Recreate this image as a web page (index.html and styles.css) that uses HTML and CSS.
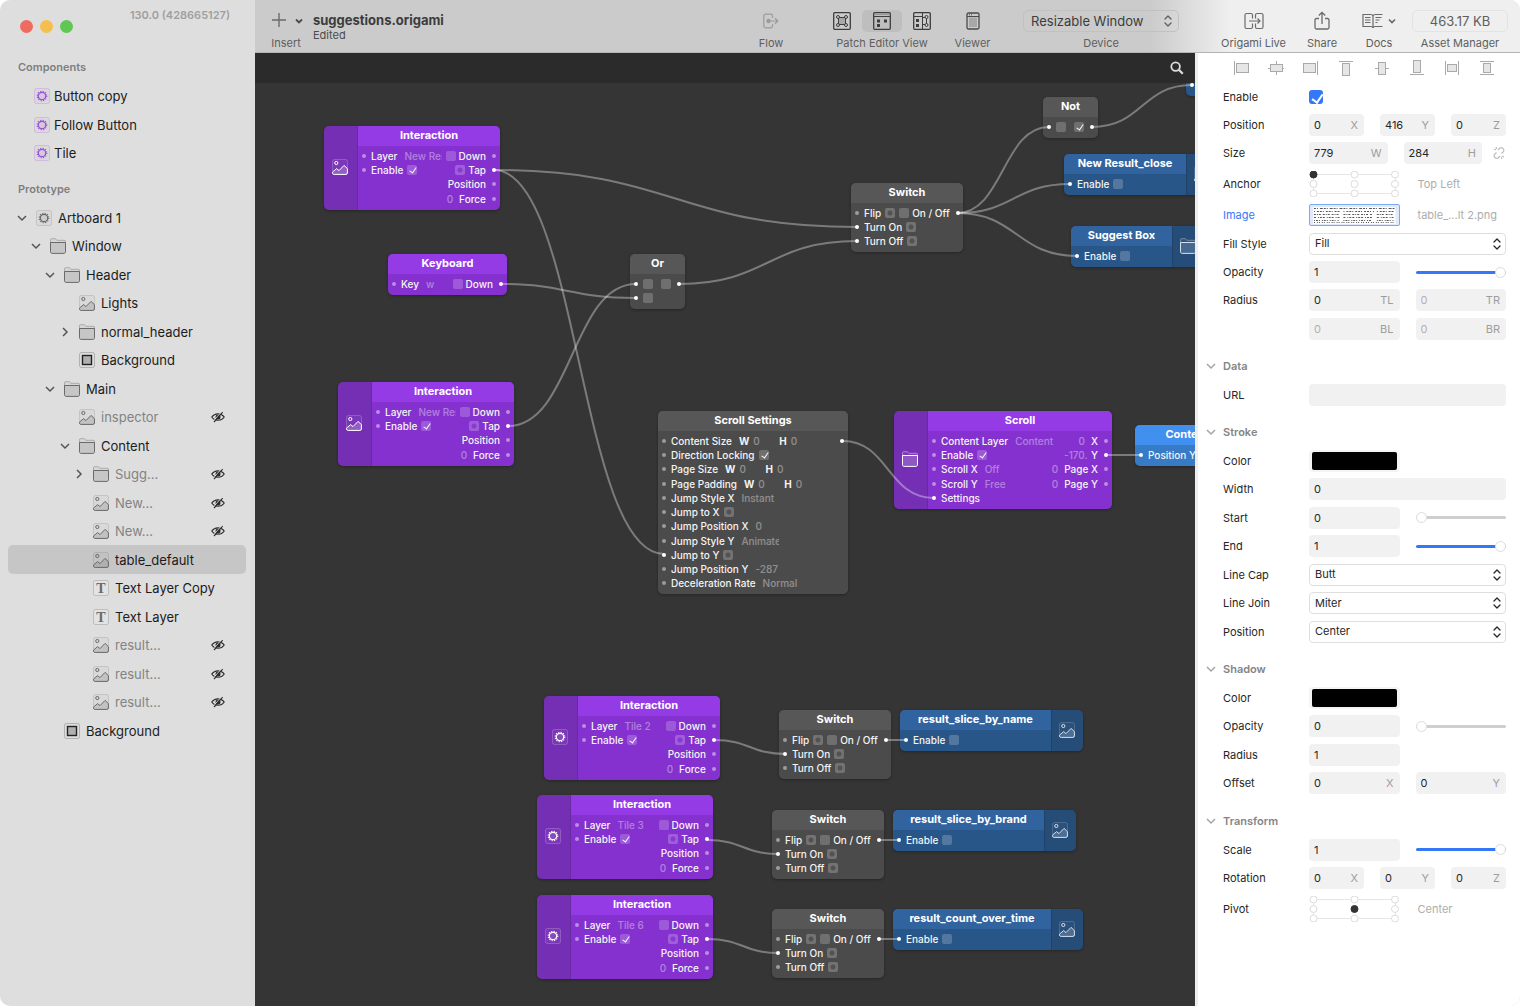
FILE: index.html
```html
<!DOCTYPE html>
<html lang="en">
<head>
<meta charset="utf-8">
<meta name="viewport" content="width=device-width, initial-scale=1">
<title>suggestions.origami</title>
<link rel="stylesheet" href="styles.css">
</head>
<body>
<svg class="symbols" aria-hidden="true">
  <symbol id="i-image" viewBox="0 0 16 16">
    <rect x=".5" y=".5" width="15" height="15" rx="2" fill="currentColor" fill-opacity=".04" stroke="currentColor" stroke-opacity=".2"/>
    <circle cx="4.3" cy="4" r="1.6" fill="none" stroke="currentColor"/>
    <path d="M.6 13 4.6 9.6 7 11.6 12 6.4 15.4 9.6V14a1.5 1.5 0 0 1-1.5 1.4H2.2A1.6 1.6 0 0 1 .6 13z" fill="currentColor" fill-opacity=".2" stroke="currentColor" stroke-linejoin="round"/>
  </symbol>
  <symbol id="i-folder" viewBox="0 0 16 16">
    <path d="M.5 5V1.8C.5 1 1 .7 1.500.7h4l1.300 1.600h7.700c.6 0 1 .4 1 1V5" fill="currentColor" fill-opacity=".06" stroke="currentColor" stroke-opacity=".4"/>
    <path d="M.5 4.500h15v9.300c0 1-.6 1.600-1.600 1.600H2.100c-1 0-1.600-.6-1.600-1.600z" fill="currentColor" fill-opacity=".2" stroke="currentColor"/>
  </symbol>
  <symbol id="i-gear" viewBox="0 0 16 16">
    <rect x=".5" y=".5" width="15" height="15" rx="2" fill="currentColor" fill-opacity=".04" stroke="currentColor" stroke-opacity=".2"/>
    <circle cx="8" cy="8" r="3.700" fill="currentColor" fill-opacity=".1" stroke="currentColor" stroke-width="1.200"/>
    <circle cx="8" cy="8" r="4.800" fill="none" stroke="currentColor" stroke-width="1.100" stroke-dasharray="1.250 1.263"/>
  </symbol>
  <symbol id="i-rect" viewBox="0 0 16 16">
    <rect x=".5" y=".5" width="15" height="15" rx="2" fill="none" stroke="#000" stroke-opacity=".2"/>
    <rect x="3.500" y="3.500" width="9" height="9" fill="#b0b0b0" stroke="#222" stroke-width="1.400"/>
  </symbol>
  <symbol id="i-text" viewBox="0 0 16 16">
    <rect x=".5" y=".5" width="15" height="15" rx="2" fill="#fff" fill-opacity=".15" stroke="#000" stroke-opacity=".15"/>
    <text x="8" y="12.600" text-anchor="middle" class="glyph-t">T</text>
  </symbol>
  <symbol id="i-hidden" viewBox="0 0 14 12">
    <path d="M.8 6C3.600 1.700 10.400 1.700 13.200 6 10.400 10.300 3.600 10.300.8 6z" fill="none" stroke="#2c2c2c" stroke-width="1.200"/>
    <circle cx="7" cy="6" r="2.500" fill="#2c2c2c"/>
    <path d="M3 11 11.600 1.200" stroke="#2c2c2c" stroke-width="1.200"/>
    <path d="M2.400 10 10.600.6" stroke="#dedede" stroke-width=".8"/>
  </symbol>
  <symbol id="i-down" viewBox="0 0 10 10"><path d="m1 3 4 4 4-4" fill="none" stroke="currentColor" stroke-width="1.500"/></symbol>
  <symbol id="i-right" viewBox="0 0 10 10"><path d="m3 1 4 4-4 4" fill="none" stroke="currentColor" stroke-width="1.500"/></symbol>
  <symbol id="i-updown" viewBox="0 0 8 12"><path d="m1 4 3-3 3 3M1 8l3 3 3-3" fill="none" stroke="currentColor" stroke-width="1.300" stroke-linecap="round" stroke-linejoin="round"/></symbol>
</svg>

<div class="window">
  <aside class="sidebar">
    <header class="sidebar-head">
      <div class="lights">
        <button class="light red" aria-label="Close"></button>
        <button class="light yellow" aria-label="Minimize"></button>
        <button class="light green" aria-label="Zoom"></button>
      </div>
      <span class="version">130.0 (428665127)</span>
    </header>
    <h2>Components</h2>
    <ul class="layers components">
      <li><svg class="icon purple-icon"><use href="#i-gear"/></svg>Button copy</li>
      <li><svg class="icon purple-icon"><use href="#i-gear"/></svg>Follow Button</li>
      <li><svg class="icon purple-icon"><use href="#i-gear"/></svg>Tile</li>
    </ul>
    <h2 class="second">Prototype</h2>
    <ul class="layers tree">
      <li><svg class="chev"><use href="#i-down"/></svg><svg class="icon"><use href="#i-gear"/></svg>Artboard 1</li>
      <li class="d1"><svg class="chev"><use href="#i-down"/></svg><svg class="icon"><use href="#i-folder"/></svg>Window</li>
      <li class="d2"><svg class="chev"><use href="#i-down"/></svg><svg class="icon"><use href="#i-folder"/></svg>Header</li>
      <li class="d3"><span class="chev"></span><svg class="icon"><use href="#i-image"/></svg>Lights</li>
      <li class="d3"><svg class="chev"><use href="#i-right"/></svg><svg class="icon"><use href="#i-folder"/></svg>normal_header</li>
      <li class="d3"><span class="chev"></span><svg class="icon"><use href="#i-rect"/></svg>Background</li>
      <li class="d2"><svg class="chev"><use href="#i-down"/></svg><svg class="icon"><use href="#i-folder"/></svg>Main</li>
      <li class="d3 off"><span class="chev"></span><svg class="icon"><use href="#i-image"/></svg>inspector<svg class="eye"><use href="#i-hidden"/></svg></li>
      <li class="d3"><svg class="chev"><use href="#i-down"/></svg><svg class="icon"><use href="#i-folder"/></svg>Content</li>
      <li class="d4 off"><svg class="chev"><use href="#i-right"/></svg><svg class="icon"><use href="#i-folder"/></svg>Sugg...<svg class="eye"><use href="#i-hidden"/></svg></li>
      <li class="d4 off"><span class="chev"></span><svg class="icon"><use href="#i-image"/></svg>New...<svg class="eye"><use href="#i-hidden"/></svg></li>
      <li class="d4 off"><span class="chev"></span><svg class="icon"><use href="#i-image"/></svg>New...<svg class="eye"><use href="#i-hidden"/></svg></li>
      <li class="d4 selected"><span class="chev"></span><svg class="icon"><use href="#i-image"/></svg>table_default</li>
      <li class="d4"><span class="chev"></span><svg class="icon"><use href="#i-text"/></svg>Text Layer Copy</li>
      <li class="d4"><span class="chev"></span><svg class="icon"><use href="#i-text"/></svg>Text Layer</li>
      <li class="d4 off"><span class="chev"></span><svg class="icon"><use href="#i-image"/></svg>result...<svg class="eye"><use href="#i-hidden"/></svg></li>
      <li class="d4 off"><span class="chev"></span><svg class="icon"><use href="#i-image"/></svg>result...<svg class="eye"><use href="#i-hidden"/></svg></li>
      <li class="d4 off"><span class="chev"></span><svg class="icon"><use href="#i-image"/></svg>result...<svg class="eye"><use href="#i-hidden"/></svg></li>
      <li class="d2"><span class="chev"></span><svg class="icon"><use href="#i-rect"/></svg>Background</li>
    </ul>
  </aside>

  <div class="main">
    <header class="toolbar">
      <button class="tool insert">
        <svg width="34" height="22" viewBox="0 0 34 22" fill="none"><path d="M3 10h14M10 3v14" stroke="#6b6b6b" stroke-width="1.400"/><path d="m27 9.500 3 3 3-3" stroke="#4a4a4a" stroke-width="1.800"/></svg>
        <span>Insert</span>
      </button>
      <div class="doc">
        <h1>suggestions.origami</h1>
        <p>Edited</p>
      </div>
      <button class="tool flow">
        <svg width="18" height="22" viewBox="0 0 18 22" fill="none" stroke="#9b9b9b" stroke-width="1.200"><path d="M10.500 8V6c0-1.200-.6-1.800-1.800-1.800H3.600C2.400 4.200 1.800 4.800 1.800 6v10c0 1.200.6 1.800 1.800 1.800h5.100c1.200 0 1.800-.6 1.800-1.800v-2M6.500 11h9M13 8.300l2.800 2.700-2.800 2.700"/><circle cx="6.500" cy="11" r="1.600" fill="#9b9b9b"/></svg>
        <span>Flow</span>
      </button>
      <div class="tool view-group">
        <div class="views">
          <button aria-label="Canvas view"><svg width="18" height="18" viewBox="0 0 18 18" fill="none" stroke="#3d3d3d"><rect x=".7" y=".7" width="16.600" height="16.600" rx="1" stroke-width="1.300"/><rect x="5.500" y="5.500" width="7" height="7" fill="#a8a8a8"/><g fill="#cbcbcb"><circle cx="5" cy="5" r="1.500"/><circle cx="13" cy="5" r="1.500"/><circle cx="5" cy="13" r="1.500"/><circle cx="13" cy="13" r="1.500"/></g></svg></button>
          <button class="active" aria-label="Patch view"><svg width="18" height="18" viewBox="0 0 18 18" fill="none" stroke="#3d3d3d"><rect x=".7" y=".7" width="16.600" height="16.600" rx="1" stroke-width="1.300"/><path d="M1 2.500h16" stroke="#999"/><path d="M1 4.500h16"/><path d="M4 7.500h3v3H4zM11 7.500h3v3h-3zM4 12h3v3H4z" fill="#3d3d3d" stroke="none"/></svg></button>
          <button aria-label="Split view"><svg width="18" height="18" viewBox="0 0 18 18" fill="none" stroke="#3d3d3d"><rect x=".7" y=".7" width="16.600" height="16.600" rx="1" stroke-width="1.300"/><path d="M1 4.500h8M9.500 1v16M9.500 5.500H12M9.500 12.500H12M13.500 6v6"/><path d="M3 7h3v3H3zM3 12h3v3H3z" fill="#3d3d3d" stroke="none"/><g fill="#cbcbcb"><circle cx="13.500" cy="5" r="1.500"/><circle cx="13.500" cy="13" r="1.500"/></g></svg></button>
        </div>
        <span>Patch Editor View</span>
      </div>
      <button class="tool viewer">
        <svg width="14" height="22" viewBox="0 0 14 22" fill="none" stroke="#4a4a4a"><rect x="1" y="3" width="12" height="16" rx="1.500" stroke-width="1.300"/><rect x="3" y="7.500" width="8" height="9.500" fill="#a8a8a8" stroke="none"/><path d="M1 6.500h12M3 4.800h1M5 4.800h1"/></svg>
        <span>Viewer</span>
      </button>
      <div class="tool device">
        <span class="device-box">
          <select id="device"><option>Resizable Window</option></select>
          <svg class="updown"><use href="#i-updown"/></svg>
        </span>
        <label for="device">Device</label>
      </div>
      <div class="right-tools">
        <button class="tool live">
          <svg width="20" height="22" viewBox="0 0 20 22" fill="none" stroke="#6b6b6b" stroke-width="1.200"><path d="M8.500 8.500V5c0-1-.5-1.500-1.500-1.500H2.500C1.500 3.500 1 4 1 5v12c0 1 .5 1.500 1.500 1.500H7c1 0 1.500-.5 1.500-1.500v-3.500M11.500 8.500V5c0-1 .5-1.500 1.500-1.500h4.500c1 0 1.500.5 1.500 1.500v12c0 1-.5 1.500-1.500 1.500H13c-1 0-1.500-.5-1.500-1.500v-3.500M5 11h11M13.500 8.500 16 11l-2.500 2.500"/></svg>
          <span>Origami Live</span>
        </button>
        <button class="tool share">
          <svg width="18" height="22" viewBox="0 0 18 22" fill="none" stroke="#6b6b6b" stroke-width="1.300"><path d="M6 8.500H3.500c-1 0-1.500.5-1.500 1.500v7.500C2 18.500 2.500 19 3.500 19h11c1 0 1.500-.5 1.500-1.500V10c0-1-.5-1.500-1.500-1.500H12M9 14V2.500M5.800 5.500 9 2.300l3.200 3.200"/></svg>
          <span>Share</span>
        </button>
        <button class="tool docs">
          <svg width="34" height="22" viewBox="0 0 34 22" fill="none" stroke="#6b6b6b" stroke-width="1.200"><path d="M20.500 4.500h-7c-1.500 0-2.500.5-2.500 2 0-1.500-1-2-2.500-2H1v12h7.500c1.500 0 2.500.3 2.500 1.500 0-1.200 1-1.500 2.500-1.500h7M11 6v11.500M3 7.500h5.500M3 10h5.500M3 12.500h5.500M13.500 7.500h6M13.500 10h4M13.500 12.500h2"/><path d="m27 9.500 3 3 3-3" stroke-width="1.700"/></svg>
          <span>Docs</span>
        </button>
        <div class="tool asset">
          <button id="assets" class="size">463.17 KB</button>
          <label for="assets">Asset Manager</label>
        </div>
      </div>
    </header>

    <div class="workspace">
      <section class="editor">
        <div class="strip"><button class="search" aria-label="Search"><svg width="14" height="14" viewBox="0 0 14 14" fill="none" stroke="#dcdcdc"><circle cx="5.600" cy="5.600" r="4.300" stroke-width="1.800"/><path d="m8.800 8.800 4 4" stroke-width="2.200"/></svg></button></div>
        <div class="board">

          <article class="node purple n-int1">
            <div class="badge"><svg class="icon"><use href="#i-image"/></svg></div>
            <div class="body"><h3>Interaction</h3>
              <div class="row"><i class="port"></i>Layer<em class="clip">New Result</em><label class="out"><input type="checkbox">Down</label><i class="port"></i></div>
              <div class="row"><i class="port"></i><label>Enable<input type="checkbox" checked></label><span class="out"><button class="pulse" aria-label="Tap"></button>Tap</span><i class="port on"></i></div>
              <div class="row"><span class="out">Position</span><i class="port"></i></div>
              <div class="row"><span class="out"><em>0</em>Force</span><i class="port"></i></div>
            </div>
          </article>

          <article class="node purple n-key">
            <div class="body"><h3>Keyboard</h3>
              <div class="row"><i class="port"></i>Key<em>w</em><label class="out"><input type="checkbox">Down</label><i class="port on"></i></div>
            </div>
          </article>

          <article class="node gray n-or">
            <div class="body"><h3>Or</h3>
              <div class="row"><i class="port on"></i><input type="checkbox" aria-label="Input 1"><span class="out"><input type="checkbox" aria-label="Result"></span><i class="port on"></i></div>
              <div class="row"><i class="port on"></i><input type="checkbox" aria-label="Input 2"></div>
            </div>
          </article>

          <article class="node purple n-int2">
            <div class="badge"><svg class="icon"><use href="#i-image"/></svg></div>
            <div class="body"><h3>Interaction</h3>
              <div class="row"><i class="port"></i>Layer<em class="clip">New Result</em><label class="out"><input type="checkbox">Down</label><i class="port"></i></div>
              <div class="row"><i class="port"></i><label>Enable<input type="checkbox" checked></label><span class="out"><button class="pulse" aria-label="Tap"></button>Tap</span><i class="port on"></i></div>
              <div class="row"><span class="out">Position</span><i class="port"></i></div>
              <div class="row"><span class="out"><em>0</em>Force</span><i class="port"></i></div>
            </div>
          </article>

          <article class="node gray n-switch">
            <div class="body"><h3>Switch</h3>
              <div class="row"><i class="port"></i>Flip<button class="pulse" aria-label="Flip"></button><label class="out"><input type="checkbox">On / Off</label><i class="port on"></i></div>
              <div class="row"><i class="port on"></i>Turn On<button class="pulse" aria-label="Turn On"></button></div>
              <div class="row"><i class="port on"></i>Turn Off<button class="pulse" aria-label="Turn Off"></button></div>
            </div>
          </article>

          <article class="node gray n-not">
            <div class="body"><h3>Not</h3>
              <div class="row"><i class="port on"></i><input type="checkbox" aria-label="Input"><span class="out"><input type="checkbox" checked aria-label="Result"></span><i class="port on"></i></div>
            </div>
          </article>

          <article class="node blue n-cut">
            <div class="body"><div class="row"><i class="port on"></i></div></div>
          </article>

          <article class="node blue n-close">
            <div class="body"><h3>New Result_close</h3>
              <div class="row"><i class="port on"></i><label>Enable<input type="checkbox"></label></div>
            </div>
            <div class="badge"><svg class="icon"><use href="#i-image"/></svg></div>
          </article>

          <article class="node blue n-suggest">
            <div class="body"><h3>Suggest Box</h3>
              <div class="row"><i class="port on"></i><label>Enable<input type="checkbox"></label></div>
            </div>
            <div class="badge"><svg class="icon"><use href="#i-folder"/></svg></div>
          </article>

          <article class="node gray n-settings">
            <div class="body"><h3>Scroll Settings</h3>
              <div class="row"><i class="port"></i>Content Size<b>W</b><em class="num">0</em><b>H</b><em>0</em><span class="out"></span><i class="port on"></i></div>
              <div class="row"><i class="port"></i><label>Direction Locking<input type="checkbox" checked></label></div>
              <div class="row"><i class="port"></i>Page Size<b>W</b><em class="num">0</em><b>H</b><em>0</em></div>
              <div class="row"><i class="port"></i>Page Padding<b>W</b><em class="num">0</em><b>H</b><em>0</em></div>
              <div class="row"><i class="port"></i>Jump Style X<em>Instant</em></div>
              <div class="row"><i class="port"></i>Jump to X<button class="pulse" aria-label="Jump to X"></button></div>
              <div class="row"><i class="port"></i>Jump Position X<em>0</em></div>
              <div class="row"><i class="port"></i>Jump Style Y<em class="clip">Animated</em></div>
              <div class="row"><i class="port on"></i>Jump to Y<button class="pulse" aria-label="Jump to Y"></button></div>
              <div class="row"><i class="port"></i>Jump Position Y<em>-287</em></div>
              <div class="row"><i class="port"></i>Deceleration Rate<em>Normal</em></div>
            </div>
          </article>

          <article class="node purple n-scroll">
            <div class="badge"><svg class="icon"><use href="#i-folder"/></svg></div>
            <div class="body"><h3>Scroll</h3>
              <div class="row"><i class="port"></i>Content Layer<em>Content</em><span class="out"><em>0</em>X</span><i class="port"></i></div>
              <div class="row"><i class="port"></i><label>Enable<input type="checkbox" checked></label><span class="out"><em class="offset">-170.5</em>Y</span><i class="port on"></i></div>
              <div class="row"><i class="port"></i>Scroll X<em>Off</em><span class="out"><em>0</em>Page X</span><i class="port"></i></div>
              <div class="row"><i class="port"></i>Scroll Y<em>Free</em><span class="out"><em>0</em>Page Y</span><i class="port"></i></div>
              <div class="row"><i class="port on"></i>Settings</div>
            </div>
          </article>

          <article class="node bright n-content">
            <div class="body"><h3>Content</h3>
              <div class="row"><i class="port on"></i>Position Y</div>
            </div>
          </article>

          <article class="node purple n-tile2">
            <div class="badge"><svg class="icon"><use href="#i-gear"/></svg></div>
            <div class="body"><h3>Interaction</h3>
              <div class="row"><i class="port"></i>Layer<em>Tile 2</em><label class="out"><input type="checkbox">Down</label><i class="port"></i></div>
              <div class="row"><i class="port"></i><label>Enable<input type="checkbox" checked></label><span class="out"><button class="pulse" aria-label="Tap"></button>Tap</span><i class="port on"></i></div>
              <div class="row"><span class="out">Position</span><i class="port"></i></div>
              <div class="row"><span class="out"><em>0</em>Force</span><i class="port"></i></div>
            </div>
          </article>
          <article class="node gray n-sw2">
            <div class="body"><h3>Switch</h3>
              <div class="row"><i class="port"></i>Flip<button class="pulse" aria-label="Flip"></button><label class="out"><input type="checkbox">On / Off</label><i class="port on"></i></div>
              <div class="row"><i class="port on"></i>Turn On<button class="pulse" aria-label="Turn On"></button></div>
              <div class="row"><i class="port"></i>Turn Off<button class="pulse" aria-label="Turn Off"></button></div>
            </div>
          </article>
          <article class="node blue n-name">
            <div class="body"><h3>result_slice_by_name</h3>
              <div class="row"><i class="port on"></i><label>Enable<input type="checkbox"></label></div>
            </div>
            <div class="badge"><svg class="icon"><use href="#i-image"/></svg></div>
          </article>

          <article class="node purple n-tile3">
            <div class="badge"><svg class="icon"><use href="#i-gear"/></svg></div>
            <div class="body"><h3>Interaction</h3>
              <div class="row"><i class="port"></i>Layer<em>Tile 3</em><label class="out"><input type="checkbox">Down</label><i class="port"></i></div>
              <div class="row"><i class="port"></i><label>Enable<input type="checkbox" checked></label><span class="out"><button class="pulse" aria-label="Tap"></button>Tap</span><i class="port on"></i></div>
              <div class="row"><span class="out">Position</span><i class="port"></i></div>
              <div class="row"><span class="out"><em>0</em>Force</span><i class="port"></i></div>
            </div>
          </article>
          <article class="node gray n-sw3">
            <div class="body"><h3>Switch</h3>
              <div class="row"><i class="port"></i>Flip<button class="pulse" aria-label="Flip"></button><label class="out"><input type="checkbox">On / Off</label><i class="port on"></i></div>
              <div class="row"><i class="port on"></i>Turn On<button class="pulse" aria-label="Turn On"></button></div>
              <div class="row"><i class="port"></i>Turn Off<button class="pulse" aria-label="Turn Off"></button></div>
            </div>
          </article>
          <article class="node blue n-brand">
            <div class="body"><h3>result_slice_by_brand</h3>
              <div class="row"><i class="port on"></i><label>Enable<input type="checkbox"></label></div>
            </div>
            <div class="badge"><svg class="icon"><use href="#i-image"/></svg></div>
          </article>

          <article class="node purple n-tile6">
            <div class="badge"><svg class="icon"><use href="#i-gear"/></svg></div>
            <div class="body"><h3>Interaction</h3>
              <div class="row"><i class="port"></i>Layer<em>Tile 6</em><label class="out"><input type="checkbox">Down</label><i class="port"></i></div>
              <div class="row"><i class="port"></i><label>Enable<input type="checkbox" checked></label><span class="out"><button class="pulse" aria-label="Tap"></button>Tap</span><i class="port on"></i></div>
              <div class="row"><span class="out">Position</span><i class="port"></i></div>
              <div class="row"><span class="out"><em>0</em>Force</span><i class="port"></i></div>
            </div>
          </article>
          <article class="node gray n-sw6">
            <div class="body"><h3>Switch</h3>
              <div class="row"><i class="port"></i>Flip<button class="pulse" aria-label="Flip"></button><label class="out"><input type="checkbox">On / Off</label><i class="port on"></i></div>
              <div class="row"><i class="port on"></i>Turn On<button class="pulse" aria-label="Turn On"></button></div>
              <div class="row"><i class="port"></i>Turn Off<button class="pulse" aria-label="Turn Off"></button></div>
            </div>
          </article>
          <article class="node blue n-count">
            <div class="body"><h3>result_count_over_time</h3>
              <div class="row"><i class="port on"></i><label>Enable<input type="checkbox"></label></div>
            </div>
            <div class="badge"><svg class="icon"><use href="#i-image"/></svg></div>
          </article>

          <svg class="wires" aria-hidden="true">
            <g transform="translate(-255 -83)">
              <path d="M494 170C675 170 676 227 857 227"/>
              <path d="M494 170C579 170 579 554 664 554"/>
              <path d="M501 284C568 284 568 298 636 298"/>
              <path d="M508 426C572 426 572 284 636 284"/>
              <path d="M679 284C768 284 768 241 857 241"/>
              <path d="M957 213C1003 213 1003 127 1049 127"/>
              <path d="M957 213C1014 213 1014 184 1070 184"/>
              <path d="M957 213C1017 213 1017 256 1077 256"/>
              <path d="M1092 127C1142 127 1142 85 1192 85"/>
              <path d="M843 441C888 441 888 498 934 498"/>
              <path d="M1106 455H1142"/>
              <path d="M714 740C750 740 750 754 786 754M885 740H906"/>
              <path d="M707 840C743 840 743 854 779 854M878 840H900"/>
              <path d="M707 939C743 939 743 953 779 953M878 939H900"/>
            </g>
          </svg>
        </div>
      </section>

      <aside class="inspector">
        <div class="align">
          <button aria-label="Align left"><svg viewBox="0 0 16 16"><rect x="3.500" y="3.500" width="12" height="9"/><path d="M1.500 1v14"/></svg></button>
          <button aria-label="Align center"><svg viewBox="0 0 16 16"><path d="M8.500 1v14"/><rect x="2.500" y="4.500" width="12" height="7"/><path d="M0 8.500h2.500M14.500 8.500H16"/></svg></button>
          <button aria-label="Align right"><svg viewBox="0 0 16 16"><rect x=".5" y="3.500" width="12" height="9"/><path d="M14.500 1v14"/></svg></button>
          <button aria-label="Align top"><svg viewBox="0 0 16 16"><rect x="4.500" y="3.500" width="7" height="12"/><path d="M1 1.500h14"/></svg></button>
          <button aria-label="Align middle"><svg viewBox="0 0 16 16"><path d="M1 8.500h14"/><rect x="4.500" y="2.500" width="7" height="12"/></svg></button>
          <button aria-label="Align bottom"><svg viewBox="0 0 16 16"><rect x="4.500" y=".5" width="7" height="12"/><path d="M1 14.500h14"/></svg></button>
          <button aria-label="Distribute horizontally"><svg viewBox="0 0 16 16"><rect x="3.500" y="4.500" width="9" height="7"/><path d="M1.500 1v14M14.500 1v14"/></svg></button>
          <button aria-label="Distribute vertically"><svg viewBox="0 0 16 16"><rect x="4.500" y="3.500" width="7" height="9"/><path d="M1 1.500h14M1 14.500h14"/></svg></button>
        </div>

        <section class="props first">
          <div class="prop"><label for="enable">Enable</label><div><input id="enable" class="check" type="checkbox" checked></div></div>
          <div class="prop"><label for="px">Position</label><div class="thirds"><span class="field"><input id="px" value="0"><span>X</span></span><span class="field"><input aria-label="Position Y" value="416"><span>Y</span></span><span class="field"><input aria-label="Position Z" value="0"><span>Z</span></span></div></div>
          <div class="prop"><label for="w">Size</label><div class="sizes"><span class="halves"><span class="field"><input id="w" value="779"><span>W</span></span><span class="field"><input aria-label="Height" value="284"><span>H</span></span></span>
            <button class="link" aria-label="Link size"><svg width="14" height="14" viewBox="0 0 14 14" fill="none" stroke="#bdbdbd" stroke-width="1.200"><path d="m6 4 2-2c1.400-1.300 4.700.8 3.700 3.300L9.500 7.500M8 10l-2 2c-1.400 1.300-4.700-.8-3.700-3.300L4.500 6.500M2 3l2 1M4 1l.6 2M12 11l-2-1M10 13l-.6-2"/></svg></button></div></div>
          <div class="prop tall"><span>Anchor</span><div class="halves"><svg class="grid9" viewBox="0 0 90 26"><path d="M4.500 3.500h82v19h-82z"/><g><circle class="dot" cx="4.500" cy="3.500" r="3.500"/><circle cx="45.500" cy="3.500" r="3.500"/><circle cx="86" cy="3.500" r="3.500"/><circle cx="4.500" cy="13" r="3.500"/><circle cx="45.500" cy="13" r="3.500"/><circle cx="86" cy="13" r="3.500"/><circle cx="4.500" cy="22.500" r="3.500"/><circle cx="45.500" cy="22.500" r="3.500"/><circle cx="86" cy="22.500" r="3.500"/></g></svg><span class="note">Top Left</span></div></div>
          <div class="prop"><span class="accent">Image</span><div class="halves"><button class="thumb" aria-label="Image preview"><svg viewBox="0 0 84 17" preserveAspectRatio="none"><rect width="84" height="17" fill="#fff"/><g stroke="#555" fill="none"><path stroke-dasharray="2 1 1 2 3 1" d="M1 1.500h82"/><path stroke-dasharray="1 2 2 1 2 1" d="M1 4.500h26M31 4.500h31M65 4.500h17"/><path stroke-dasharray="2 1 1 1 2 2" d="M1 7.500h26M31 7.500h29M65 7.500h17"/><path stroke-dasharray="2 2 1 1 2 1" d="M1 10.500h26M31 10.500h31M65 10.500h17"/><path stroke-dasharray="1 1 2 1 1 2" d="M1 13.500h26M31 13.500h29M65 13.500h17"/><path stroke-dasharray="1 2 1 1" d="M1 15.500h82"/></g></svg></button><span class="note">table_...lt 2.png</span></div></div>
          <div class="prop"><label for="fill">Fill Style</label><div class="pick"><select id="fill"><option>Fill</option></select><svg class="updown"><use href="#i-updown"/></svg></div></div>
          <div class="prop"><label for="op">Opacity</label><div class="halves"><span class="field"><input id="op" value="1"></span><input class="full" type="range" value="100" aria-label="Opacity slider"></div></div>
          <div class="prop"><label for="tl">Radius</label><div class="halves"><span class="field"><input id="tl" value="0"><span>TL</span></span><span class="field dim"><input aria-label="Top right" value="0"><span>TR</span></span></div></div>
          <div class="prop"><span></span><div class="halves"><span class="field dim"><input aria-label="Bottom left" value="0"><span>BL</span></span><span class="field dim"><input aria-label="Bottom right" value="0"><span>BR</span></span></div></div>
        </section>

        <section class="props">
          <h2><svg class="chev"><use href="#i-down"/></svg>Data</h2>
          <div class="prop"><label for="url">URL</label><div><span class="field"><input id="url" value=""></span></div></div>
        </section>

        <section class="props">
          <h2><svg class="chev"><use href="#i-down"/></svg>Stroke</h2>
          <div class="prop"><label for="sc">Color</label><div class="halves"><input id="sc" type="color" value="#000000"></div></div>
          <div class="prop"><label for="sw">Width</label><div><span class="field"><input id="sw" value="0"></span></div></div>
          <div class="prop"><label for="ss">Start</label><div class="halves"><span class="field"><input id="ss" value="0"></span><input type="range" value="0" aria-label="Start slider"></div></div>
          <div class="prop"><label for="se">End</label><div class="halves"><span class="field"><input id="se" value="1"></span><input class="full" type="range" value="100" aria-label="End slider"></div></div>
          <div class="prop"><label for="cap">Line Cap</label><div class="pick"><select id="cap"><option>Butt</option></select><svg class="updown"><use href="#i-updown"/></svg></div></div>
          <div class="prop"><label for="join">Line Join</label><div class="pick"><select id="join"><option>Miter</option></select><svg class="updown"><use href="#i-updown"/></svg></div></div>
          <div class="prop"><label for="spos">Position</label><div class="pick"><select id="spos"><option>Center</option></select><svg class="updown"><use href="#i-updown"/></svg></div></div>
        </section>

        <section class="props">
          <h2><svg class="chev"><use href="#i-down"/></svg>Shadow</h2>
          <div class="prop"><label for="shc">Color</label><div class="halves"><input id="shc" type="color" value="#000000"></div></div>
          <div class="prop"><label for="sho">Opacity</label><div class="halves"><span class="field"><input id="sho" value="0"></span><input type="range" value="0" aria-label="Shadow opacity slider"></div></div>
          <div class="prop"><label for="shr">Radius</label><div class="halves"><span class="field"><input id="shr" value="1"></span></div></div>
          <div class="prop"><label for="shx">Offset</label><div class="halves"><span class="field"><input id="shx" value="0"><span>X</span></span><span class="field"><input aria-label="Offset Y" value="0"><span>Y</span></span></div></div>
        </section>

        <section class="props">
          <h2><svg class="chev"><use href="#i-down"/></svg>Transform</h2>
          <div class="prop"><label for="scale">Scale</label><div class="halves"><span class="field"><input id="scale" value="1"></span><input class="full" type="range" value="100" aria-label="Scale slider"></div></div>
          <div class="prop"><label for="rx">Rotation</label><div class="thirds"><span class="field"><input id="rx" value="0"><span>X</span></span><span class="field"><input aria-label="Rotation Y" value="0"><span>Y</span></span><span class="field"><input aria-label="Rotation Z" value="0"><span>Z</span></span></div></div>
          <div class="prop tall"><span>Pivot</span><div class="halves"><svg class="grid9" viewBox="0 0 90 26"><path d="M4.500 3.500h82v19h-82z"/><g><circle cx="4.500" cy="3.500" r="3.500"/><circle cx="45.500" cy="3.500" r="3.500"/><circle cx="86" cy="3.500" r="3.500"/><circle cx="4.500" cy="13" r="3.500"/><circle class="dot" cx="45.500" cy="13" r="3.500"/><circle cx="86" cy="13" r="3.500"/><circle cx="4.500" cy="22.500" r="3.500"/><circle cx="45.500" cy="22.500" r="3.500"/><circle cx="86" cy="22.500" r="3.500"/></g></svg><span class="note">Center</span></div></div>
        </section>
      </aside>
    </div>
  </div>
</div>
</body>
</html>
```

FILE: styles.css
```css
* { box-sizing: border-box; }

body {
  margin: 0;
  background: #fff;
  font: 11px/14px Inter, "Liberation Sans", sans-serif;
  color: #262626;
}

h1, h2, h3, p, ul { margin: 0; padding: 0; }
ul { list-style: none; }
button, input, select { font: inherit; color: inherit; margin: 0; }
button { padding: 0; border: 0; background: none; }
svg { flex: none; }
.symbols { display: none; }

.window {
  display: grid;
  grid-template-columns: 255px 1fr;
  min-height: 100vh;
  border-radius: 10px;
  overflow: hidden;
  background: #dedede;
}

/* Sidebar */
.sidebar-head { display: flex; height: 53px; padding: 0 25px 0 20px; justify-content: space-between; }
.lights { display: flex; gap: 7px; padding-top: 20px; }
.light { width: 13px; height: 13px; border-radius: 50%; }
.red { background: #ed6b5f; }
.yellow { background: #f5bf4f; }
.green { background: #62c655; }
.version { padding-top: 8px; font-weight: 600; color: #9f9f9f; }
.sidebar h2 { height: 29px; padding: 0 18px; font-size: 11px; line-height: 29px; font-weight: 600; color: #7f7f7f; }
.sidebar h2.second { height: 28px; margin-top: 8px; line-height: 28px; }

.layers { padding: 0 9px 0 8px; font-size: 13px; color: #1c1c1c; }
.layers li { display: flex; align-items: center; height: 29px; padding: 0 21px 0 9px; border-radius: 5px; }
.layers li:nth-child(even) { height: 28px; }
.components li { height: 28px; padding-left: 26px; }
.components li:nth-child(even) { height: 29px; }
.layers .icon { margin-right: 6px; color: #6a6a6a; }
.layers .purple-icon { margin-right: 4px; color: #9a4fd8; }
.icon { width: 16px; height: 16px; }
.chev { flex: none; width: 10px; height: 10px; color: #555; }
.tree .chev { margin-right: 9px; }
.layers .d1 { padding-left: 23px; }
.layers .d2 { padding-left: 37px; }
.layers .d3 { padding-left: 52px; }
.layers .d4 { padding-left: 66px; }
.layers .off { color: #838383; }
.layers .selected { background: #c6c6c6; }
.eye { width: 14px; height: 12px; margin-left: auto; }
.glyph-t { font: bold 14px "Liberation Serif", serif; fill: #6a6a6a; }

/* Toolbar */
.main { display: flex; flex-direction: column; min-width: 0; }
.toolbar {
  display: flex;
  height: 53px;
  padding: 10px 12px 0 14px;
  color: #5e5e5e;
  background: linear-gradient(to left, #efefef 290px, #cbcbcb 370px);
  border-bottom: 1px solid #b4b4b4;
}
.tool { display: flex; flex-direction: column; align-items: center; flex: none; }
.tool > span:last-child, .tool > label { margin-top: 4px; white-space: nowrap; }
.insert { width: 34px; }
.doc { margin: 2px auto 0 10px; }
.doc h1 { font-size: 13px; line-height: 16px; color: #3c3c3c; }
.doc p { color: #4c4c4c; }
.flow { width: 60px; margin-right: 21px; }
.views { display: flex; }
.views button { display: grid; place-items: center; width: 40px; height: 22px; border-radius: 5px; }
.views .active { background: #bebebe; }
.viewer { width: 61px; }
.device { width: 156px; margin: 0 42px 0 20px; }
.device-box { position: relative; width: 100%; height: 22px; }
.device select {
  appearance: none;
  width: 100%;
  height: 22px;
  padding: 0 7px;
  border: 1px solid #c1c1c1;
  border-radius: 5px;
  background: transparent;
  font-size: 13px;
  color: #3c3c3c;
}
.updown { position: absolute; right: 5px; top: 5px; width: 8px; height: 12px; pointer-events: none; }
.device .updown { right: 7px; }
.right-tools { display: flex; gap: 12px; }
.share { width: 48px; }
.docs { width: 42px; }
.asset { width: 96px; }
.size { width: 100%; height: 22px; border: 1px solid #e3e3e3; border-radius: 5px; font-size: 13px; }

/* Patch editor */
.workspace { display: flex; flex: 1; }
.editor { display: flex; flex-direction: column; flex: 1; min-width: 0; background: #353535; }
.strip { display: flex; align-items: center; justify-content: flex-end; height: 30px; padding-right: 11px; background: #2b2b2b; }
.search { height: 14px; }
.board { position: relative; flex: 1; overflow: hidden; color: #f4f4f4; font-size: 10px; font-weight: 500; }
.wires { position: absolute; inset: 0; width: 100%; height: 100%; pointer-events: none; }
.wires path { fill: none; stroke: #fff; stroke-opacity: .35; stroke-width: 2; }

.node { position: absolute; display: flex; border-radius: 5px; overflow: hidden; box-shadow: 0 1px 3px rgba(0, 0, 0, .3); }
.body { flex: 1; min-width: 0; padding-bottom: 4px; }
.body h3 { height: 20px; margin-bottom: 3px; font-size: 11px; line-height: 19px; font-weight: 700; text-align: center; color: #fff; }
.badge { display: grid; place-items: center; flex: none; width: 34px; padding: 0 2px 2px 0; color: #fff; }
.blue .badge { width: 32px; color: #d3dfec; }
.row { display: flex; align-items: center; gap: 4px; height: 14px; padding: 0 4px; white-space: nowrap; }
.row:nth-child(4n + 5) { height: 15px; }
.row label, .out { display: flex; align-items: center; gap: 4px; }
.row .out { gap: 3px; margin-left: auto; }
.port { flex: none; width: 4px; height: 4px; border-radius: 50%; background: #fff; opacity: .45; }
.port.on { opacity: 1; }
.port:first-child { margin-right: 1px; }
.port:last-child:not(:first-child) { margin-left: 2px; }
.row em { margin: 0 3px; font-style: normal; opacity: .4; }
.row .clip { width: 38px; margin-right: 0; overflow: hidden; }
.row .num { width: 16px; }
.row b + em { margin-left: 0; }
.row .offset { width: 24px; margin-right: 0; overflow: hidden; }
.row b { margin-left: 3px; font-weight: 700; }
.row input { position: relative; flex: none; appearance: none; width: 10px; height: 10px; border-radius: 2px; background: rgba(255, 255, 255, .2); }
.row input:checked::after {
  content: "";
  position: absolute;
  left: 4px;
  top: 1px;
  width: 3px;
  height: 6px;
  border: solid #fff;
  border-width: 0 1px 1px 0;
  transform: rotate(35deg);
}
.pulse { flex: none; width: 10px; height: 10px; border-radius: 2px; background: radial-gradient(circle, rgba(255, 255, 255, .04) 2px, rgba(255, 255, 255, .22) 3px); }

.purple .body { background: #8431cf; }
.purple h3 { background: #953be6; }
.purple .badge { background: #752fb5; border-right: 1px solid #672a9f; }
.gray .body { background: #4b4b4b; }
.gray h3 { background: #575757; }
.blue .body { background: #285688; }
.blue h3 { background: #31649f; }
.blue .badge { background: #264c78; border-left: 1px solid #20426a; }
.bright .body { background: #377ac6; }
.bright h3 { background: #418fee; }

.n-int1 { left: 69px; top: 43px; width: 176px; }
.n-key { left: 133px; top: 171px; width: 119px; }
.n-or { left: 375px; top: 171px; width: 55px; }
.n-int2 { left: 83px; top: 299px; width: 176px; }
.n-switch { left: 596px; top: 100px; width: 112px; }
.n-not { left: 788px; top: 14px; width: 55px; }
.n-cut { left: 931px; top: -5px; width: 60px; }
.n-close { left: 809px; top: 71px; width: 154px; }
.n-suggest { left: 816px; top: 143px; width: 133px; }
.n-settings { left: 403px; top: 328px; width: 190px; }
.n-scroll { left: 639px; top: 328px; width: 218px; }
.n-content { left: 880px; top: 342px; width: 104px; }
.n-tile2 { left: 289px; top: 613px; width: 176px; }
.n-sw2 { left: 524px; top: 627px; width: 112px; }
.n-name { left: 645px; top: 627px; width: 183px; }
.n-tile3 { left: 282px; top: 712px; width: 176px; }
.n-sw3 { left: 517px; top: 727px; width: 112px; }
.n-brand { left: 638px; top: 727px; width: 183px; }
.n-tile6 { left: 282px; top: 812px; width: 176px; }
.n-sw6 { left: 517px; top: 826px; width: 112px; }
.n-count { left: 638px; top: 826px; width: 190px; }

/* Inspector */
.inspector { flex: none; width: 325px; padding: 0 14px 20px 13px; background: #fff; border-left: 3px solid #eee; }
.align { display: flex; justify-content: space-between; align-items: center; height: 30px; padding: 0 11px 0 22px; }
.align svg { display: block; width: 16px; height: 16px; fill: #e6e6e6; stroke: #a9a9a9; }
.props + .props { margin-top: 9px; }
.props:last-child { padding-top: 1px; }
.prop { display: grid; grid-template-columns: 86px 1fr; align-items: center; height: 28px; padding-left: 12px; }
.props h2 { display: flex; align-items: center; gap: 7px; height: 28px; font-size: 11px; font-weight: 600; color: #858585; }
.props h2 .chev { margin-left: -5px; color: #a5a5a5; }
.prop:nth-child(even) { height: 29px; }
.first .prop:nth-child(2), .first .prop:nth-child(8) { height: 28px; }
.first .prop:nth-child(9) { height: 29px; }
.prop.tall { height: 34px; }
.accent { color: #3478f6; }
.halves { display: grid; grid-template-columns: 1fr 1fr; gap: 16px; align-items: center; }
.thirds { display: grid; grid-template-columns: 1fr 1fr 1fr; gap: 16px; }
.sizes { display: grid; grid-template-columns: 1fr 14px; gap: 10px; align-items: center; }
.link { height: 14px; }
.field { display: flex; align-items: center; min-width: 0; height: 22px; padding: 0 6px 0 5px; border-radius: 4px; background: #f1f1f1; }
.field input { flex: 1; width: 0; min-width: 0; padding: 0; border: 0; background: none; }
.field span { color: #9d9d9d; }
.dim input { color: #b0b0b0; }
.note { padding-left: 2px; color: #adadad; white-space: nowrap; }
.grid9 { width: 90px; height: 26px; fill: none; stroke: #e6e6e6; }
.grid9 circle { fill: #fff; stroke: #dcdcdc; }
.grid9 .dot { fill: #333; stroke: #333; }
.thumb { height: 22px; padding: 2px 3px; border: 1px solid #78a9f7; border-radius: 2px; background: #dfeafc; }
.thumb svg { display: block; width: 100%; height: 17px; }
.pick { position: relative; }
.pick select { display: block; appearance: none; width: 100%; height: 22px; padding: 0 5px 1px; border: 1px solid #dedede; border-radius: 4px; background: #fff; }

.check { position: relative; display: block; appearance: none; width: 14px; height: 14px; border-radius: 3px; background: #3478f6; }
.check::after {
  content: "";
  position: absolute;
  left: 5px;
  top: 2px;
  width: 5px;
  height: 9px;
  border: solid #fff;
  border-width: 0 2px 2px 0;
  transform: rotate(35deg);
}

input[type="color"] { appearance: none; width: 100%; height: 22px; padding: 2px 3px; border: 0; border-radius: 4px; background: #f4f4f4; }
input[type="color"]::-webkit-color-swatch-wrapper { padding: 0; }
input[type="color"]::-webkit-color-swatch { border: 0; border-radius: 2px; }

input[type="range"] { appearance: none; width: 100%; height: 12px; background: none; }
input[type="range"]::-webkit-slider-runnable-track { height: 3px; border-radius: 2px; background: #cfcfcf; }
input[type="range"].full::-webkit-slider-runnable-track { background: #3478f6; }
input[type="range"]::-webkit-slider-thumb { appearance: none; width: 11px; height: 11px; margin-top: -4px; border: 1px solid #dcdcdc; border-radius: 50%; background: #fff; }
```
